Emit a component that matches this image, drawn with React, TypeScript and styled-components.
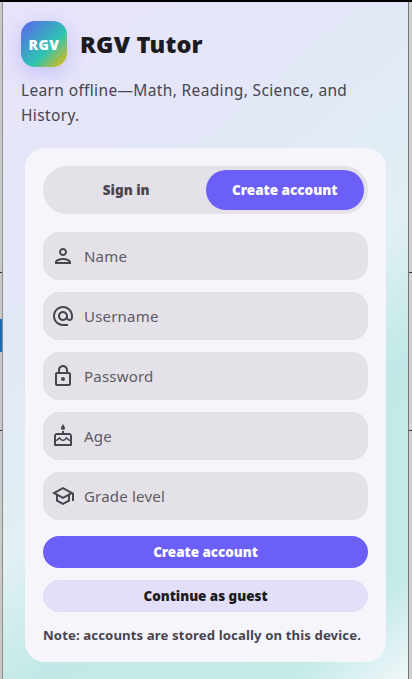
import { ReactNode } from 'react';
import styled, { createGlobalStyle } from 'styled-components';
import { MdOutlinePerson, MdAlternateEmail, MdOutlineLock, MdOutlineCake, MdOutlineSchool } from 'react-icons/md';

const FONT = `"Noto Sans", "Open Sans", "Liberation Sans", sans-serif`;

const GlobalStyle = createGlobalStyle`
  * { box-sizing: border-box; }
  html, body { margin: 0; padding: 0; }
  body { font-family: ${FONT}; background: #d4d4d4; overflow: hidden; }
`;

const Screen = styled.div`
  width: 412px;
  height: 679px;
  display: flex;
  flex-direction: column;
`;

const TopBar = styled.div`
  height: 2px;
  flex: none;
  background: #000;
`;

const Body = styled.div`
  flex: 1;
  display: flex;
  min-height: 0;
`;

const LeftEdge = styled.div`
  width: 3px;
  flex: none;
  border-right: 1px solid #8d8d8d;
  background:
    linear-gradient(#1f68b4, #1f68b4) 0 317px / 2px 33px no-repeat,
    linear-gradient(#333, #333) 0 270px / 2px 1px no-repeat,
    linear-gradient(#333, #333) 0 428px / 2px 1px no-repeat,
    #c9c9c9;
`;

const RightEdge = styled.div`
  width: 4px;
  flex: none;
  border-left: 1px solid #777;
  background:
    linear-gradient(#333, #333) 0 270px / 3px 1px no-repeat,
    linear-gradient(#333, #333) 0 428px / 3px 1px no-repeat,
    #d2d2d2;
`;

const Main = styled.main`
  flex: 1;
  min-width: 0;
  padding: 19px 18px 0;
  background: linear-gradient(139deg, #e8e3fb 0%, #e2e8f6 35%, #e0f0f3 55%, #c2e9e7 68%, #c4eae8 90%, #f0f7fa 100%);
`;

const Header = styled.header`
  display: flex;
  align-items: center;
  gap: 13px;
`;

const Logo = styled.div`
  width: 46px;
  height: 46px;
  border-radius: 14px;
  display: flex;
  align-items: center;
  justify-content: center;
  color: #fff;
  font-size: 14px;
  font-weight: 900;
  letter-spacing: 0.5px;
  background: linear-gradient(135deg, #5a63ef 0%, #2fc4b2 60%, #f5b700 100%);
  box-shadow: 0 6px 20px rgba(108, 95, 248, 0.28);
`;

const Title = styled.h1`
  margin: 0;
  font-size: 23.5px;
  font-weight: 900;
  line-height: 30px;
  letter-spacing: 0.2px;
  color: #1c1b22;
`;

const Tagline = styled.p`
  margin: 11px 0 0;
  font-size: 15.5px;
  line-height: 25px;
  letter-spacing: 0.35px;
  color: #48454f;
`;

const Card = styled.section`
  margin: 20px 4px 0;
  padding: 18px;
  border-radius: 20px;
  background: #f7f5fc;
  display: flex;
  flex-direction: column;
`;

const Tabs = styled.div`
  height: 48px;
  border-radius: 24px;
  padding: 4px;
  background: #e4e1e8;
  display: flex;
  margin-bottom: 18px;
`;

const Tab = styled.button<{ $active?: boolean }>`
  flex: 1;
  border: 0;
  border-radius: 20px;
  font-family: ${FONT};
  font-size: 13.5px;
  font-weight: 900;
  background: ${(p) => (p.$active ? '#6c5ff8' : 'transparent')};
  color: ${(p) => (p.$active ? '#fff' : '#48454f')};
`;

const Fields = styled.div`
  display: flex;
  flex-direction: column;
  gap: 12px;
`;

const FieldRow = styled.label`
  height: 48px;
  border-radius: 16px;
  background: #e4e1e8;
  display: flex;
  align-items: center;
  gap: 7px;
  padding-left: 8px;
  color: #48454f;
  svg { flex: none; }
`;

const FieldInput = styled.input`
  flex: 1;
  min-width: 0;
  border: 0;
  outline: 0;
  background: transparent;
  font-family: ${FONT};
  font-size: 15px;
  letter-spacing: 0.2px;
  &::placeholder { color: #5d5a64; opacity: 1; }
`;

const Button = styled.button<{ $tone: 'primary' | 'guest' }>`
  height: 32px;
  border: 0;
  border-radius: 16px;
  font-family: ${FONT};
  font-size: 13.4px;
  font-weight: 900;
  background: ${(p) => (p.$tone === 'primary' ? '#6c5ff8' : '#e3dff8')};
  color: ${(p) => (p.$tone === 'primary' ? '#fff' : '#1c1b22')};
  margin-top: ${(p) => (p.$tone === 'primary' ? '16px' : '12px')};
`;

const Note = styled.p`
  margin: 14px 0 0;
  font-size: 13.2px;
  font-weight: 700;
  line-height: 18px;
  letter-spacing: 0.1px;
  color: #48454f;
`;

function Field({ icon, placeholder, type }: { icon: ReactNode; placeholder: string; type?: string }) {
  return (
    <FieldRow>
      {icon}
      <FieldInput placeholder={placeholder} type={type ?? 'text'} />
    </FieldRow>
  );
}

export default function App() {
  return (
    <Screen>
      <GlobalStyle />
      <TopBar />
      <Body>
        <LeftEdge />
        <Main>
          <Header>
            <Logo>RGV</Logo>
            <Title>RGV Tutor</Title>
          </Header>
          <Tagline>Learn offline—Math, Reading, Science, and History.</Tagline>
          <Card>
            <Tabs>
              <Tab>Sign in</Tab>
              <Tab $active>Create account</Tab>
            </Tabs>
            <Fields>
              <Field icon={<MdOutlinePerson size={24} />} placeholder="Name" />
              <Field icon={<MdAlternateEmail size={24} />} placeholder="Username" />
              <Field icon={<MdOutlineLock size={24} />} placeholder="Password" type="password" />
              <Field icon={<MdOutlineCake size={24} />} placeholder="Age" />
              <Field icon={<MdOutlineSchool size={24} />} placeholder="Grade level" />
            </Fields>
            <Button $tone="primary">Create account</Button>
            <Button $tone="guest">Continue as guest</Button>
            <Note>Note: accounts are stored locally on this device.</Note>
          </Card>
        </Main>
        <RightEdge />
      </Body>
    </Screen>
  );
}
